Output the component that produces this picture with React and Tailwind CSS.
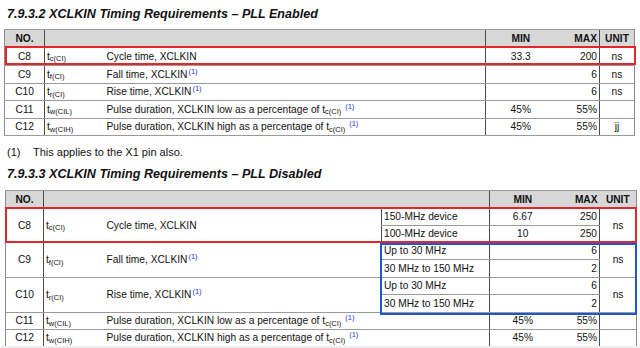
import React from "react";

const FONT = { fontFamily: '"Liberation Sans", Arial, sans-serif' };

function Sym({ s }) {
  return (
    <span>
      t<sub className="text-[7.5px]">{s}</sub>
    </span>
  );
}

function Note() {
  return <sup className="text-[7.5px] text-[#2330e8] ml-[1px]">(1)</sup>;
}

const H = "border-t border-b border-t-[#9a9a9a] border-b-[#9a9a9a] p-0";
const L = "border-l border-l-[#4a4a4a]";
const R = "border-r border-r-[#8a8a8a]";

function Table1() {
  return (
    <div className="relative ml-[4px] w-[630px]">
      <table className="table-fixed border-collapse w-[630px] text-[10.2px] leading-[12px] text-[#111]">
        <colgroup>
          <col className="w-[40px]" />
          <col className="w-[59px]" />
          <col className="w-[382px]" />
          <col className="w-[70px]" />
          <col className="w-[44px]" />
          <col className="w-[35px]" />
        </colgroup>
        <thead>
          <tr className="h-[18px] bg-[#d7d7d7] font-bold">
            <td className={`${H} border-l border-l-[#8a8a8a] text-center`}>NO.</td>
            <td className={`${H} ${L}`} colSpan={2}></td>
            <td className={`${H} ${L} text-center`}>MIN</td>
            <td className={`${H} text-right pr-[2px]`}>MAX</td>
            <td className={`${H} ${L} ${R} text-center`}>UNIT</td>
          </tr>
        </thead>
        <tbody>
          {[
            ["C8", "c(CI)", <>Cycle time, XCLKIN</>, "33.3", "200", "ns", 18],
            ["C9", "f(CI)", <>Fall time, XCLKIN<Note /></>, "", "6", "ns", 18],
            ["C10", "r(CI)", <>Rise time, XCLKIN<Note /></>, "", "6", "ns", 17],
            ["C11", "w(CIL)", <>Pulse duration, XCLKIN low as a percentage of <Sym s="c(CI)" /> <Note /></>, "45%", "55%", "", 18],
            ["C12", "w(CIH)", <>Pulse duration, XCLKIN high as a percentage of <Sym s="c(CI)" /> <Note /></>, "45%", "55%", "jj", 17],
          ].map(([no, s, d, mn, mx, u, h]) => (
            <tr key={no} style={{ height: h }}>
              <td className={`${H} border-l border-l-[#8a8a8a] text-center`}>{no}</td>
              <td className={`${H} ${L} pl-[2px]`}><Sym s={s} /></td>
              <td className={`${H} pl-[3px] whitespace-nowrap`}>{d}</td>
              <td className={`${H} ${L} text-center`}>{mn}</td>
              <td className={`${H} text-right pr-[2px]`}>{mx}</td>
              <td className={`${H} ${L} ${R} text-center`}>{u}</td>
            </tr>
          ))}
        </tbody>
      </table>
      <div className="absolute left-[1px] top-[17px] w-[631px] h-[19px] border-2 border-[#e3262a]" />
    </div>
  );
}

function Table2() {
  return (
    <div className="relative ml-[5px] w-[631px]">
      <table className="table-fixed border-collapse w-[631px] text-[10.2px] leading-[12px] text-[#111]">
        <colgroup>
          <col className="w-[38px]" />
          <col className="w-[60px]" />
          <col className="w-[278px]" />
          <col className="w-[108px]" />
          <col className="w-[66px]" />
          <col className="w-[44px]" />
          <col className="w-[37px]" />
        </colgroup>
        <thead>
          <tr className="h-[18px] bg-[#d7d7d7] font-bold">
            <td className={`${H} border-l border-l-[#8a8a8a] text-center`}>NO.</td>
            <td className={`${H} ${L}`} colSpan={3}></td>
            <td className={`${H} ${L} text-center`}>MIN</td>
            <td className={`${H} text-right pr-[2px]`}>MAX</td>
            <td className={`${H} ${R} text-center`}>UNIT</td>
          </tr>
        </thead>
        <tbody>
          <tr className="h-[17px]">
            <td rowSpan={2} className={`${H} border-l border-l-[#8a8a8a] text-center`}>C8</td>
            <td rowSpan={2} className={`${H} ${L} pl-[2px]`}><Sym s="c(CI)" /></td>
            <td rowSpan={2} className={`${H} pl-[3px]`}>Cycle time, XCLKIN</td>
            <td className={`${H} ${L} pl-[2px]`}>150-MHz device</td>
            <td className={`${H} ${L} text-center`}>6.67</td>
            <td className={`${H} text-right pr-[2px]`}>250</td>
            <td rowSpan={2} className={`${H} ${L} ${R} text-center`}>ns</td>
          </tr>
          <tr className="h-[17px]">
            <td className={`${H} ${L} pl-[2px]`}>100-MHz device</td>
            <td className={`${H} ${L} text-center`}>10</td>
            <td className={`${H} text-right pr-[2px]`}>250</td>
          </tr>
          {[
            ["C9", "f(CI)", "Fall time, XCLKIN"],
            ["C10", "r(CI)", "Rise time, XCLKIN"],
          ].map(([no, s, d]) => (
            <React.Fragment key={no}>
              <tr className="h-[17px]">
                <td rowSpan={2} className={`${H} border-l border-l-[#8a8a8a] text-center`}>{no}</td>
                <td rowSpan={2} className={`${H} ${L} pl-[2px]`}><Sym s={s} /></td>
                <td rowSpan={2} className={`${H} pl-[3px]`}>{d}<Note /></td>
                <td className={`${H} ${L} pl-[2px]`}>Up to 30 MHz</td>
                <td className={`${H} ${L}`}></td>
                <td className={`${H} text-right pr-[2px]`}>6</td>
                <td rowSpan={2} className={`${H} ${L} ${R} text-center`}>ns</td>
              </tr>
              <tr className="h-[18px]">
                <td className={`${H} ${L} pl-[2px] whitespace-nowrap`}>30 MHz to 150 MHz</td>
                <td className={`${H} ${L}`}></td>
                <td className={`${H} text-right pr-[2px]`}>2</td>
              </tr>
            </React.Fragment>
          ))}
          {[
            ["C11", "w(CIL)", "low"],
            ["C12", "w(CIH)", "high"],
          ].map(([no, s, w]) => (
            <tr key={no} className="h-[17px]">
              <td className={`${H} border-l border-l-[#8a8a8a] text-center`}>{no}</td>
              <td className={`${H} ${L} pl-[2px]`}><Sym s={s} /></td>
              <td colSpan={2} className={`${H} pl-[3px] whitespace-nowrap`}>
                Pulse duration, XCLKIN {w} as a percentage of <Sym s="c(CI)" /> <Note />
              </td>
              <td className={`${H} ${L} text-center`}>45%</td>
              <td className={`${H} text-right pr-[2px]`}>55%</td>
              <td className={`${H} ${L} ${R}`}></td>
            </tr>
          ))}
        </tbody>
      </table>
      <div className="absolute left-[0px] top-[17px] w-[632px] h-[36px] border-2 border-[#e3262a]" />
      <div className="absolute left-[375px] top-[53px] w-[257px] h-[72px] border-2 border-[#1d55d6]" />
    </div>
  );
}

export default function App() {
  return (
    <div className="w-[640px] h-[348px] overflow-hidden bg-white relative" style={FONT}>
      <div className="h-[346px] overflow-hidden">
        <div className="pt-[6px] pl-[7px] text-[12.6px] leading-[16px] font-bold italic text-[#111]">
          7.9.3.2 XCLKIN Timing Requirements – PLL Enabled
        </div>
        <div className="mt-[7px]">
          <Table1 />
        </div>
        <div className="mt-[9px] pl-[7px] flex text-[11px] leading-[14px] text-[#111]">
          <span className="w-[26px]">(1)</span>
          <span>This applies to the X1 pin also.</span>
        </div>
        <div className="mt-[7px] pl-[7px] text-[12.6px] leading-[16px] font-bold italic text-[#111]">
          7.9.3.3 XCLKIN Timing Requirements – PLL Disabled
        </div>
        <div className="mt-[8px]">
          <Table2 />
        </div>
      </div>
      <div className="h-[2px] bg-[#eeeeee]" />
    </div>
  );
}
